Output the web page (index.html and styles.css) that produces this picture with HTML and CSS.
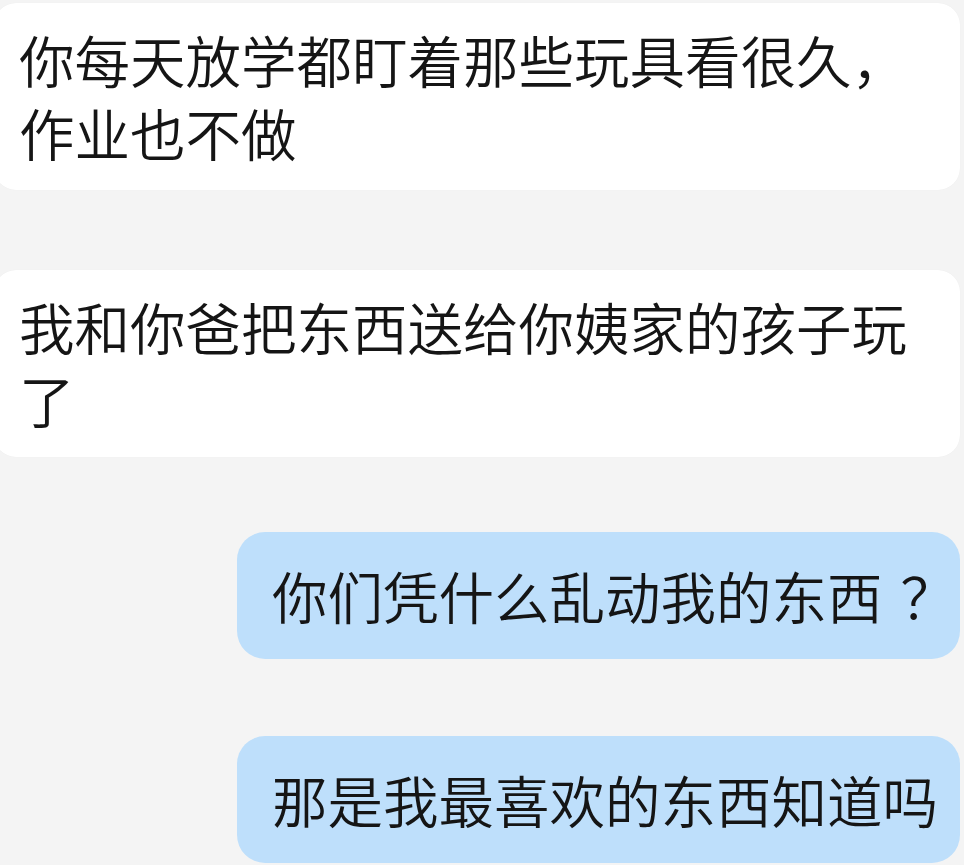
FILE: index.html
```html
<!DOCTYPE html>
<html lang="zh-CN">
<head>
<meta charset="utf-8">
<title>聊天</title>
<link rel="stylesheet" href="styles.css">
</head>
<body>
<div class="chat">
  <div class="bubble left first">你每天放学都盯着那些玩具看很久，作业也不做</div>
  <div class="bubble left second">我和你爸把东西送给你姨家的孩子玩了</div>
  <div class="bubble right third">你们凭什么乱动我的东西<span class="qmark">？</span></div>
  <div class="bubble right fourth">那是我最喜欢的东西知道吗</div>
</div>
</body>
</html>
```

FILE: styles.css
```css
html, body {
  margin: 0;
  padding: 0;
  background: #f4f4f4;
}
body {
  width: 964px;
  height: 865px;
  overflow: hidden;
  font-family: "Noto Sans CJK SC", "Noto Sans", sans-serif;
  color: #151515;
}
.chat {
  display: flex;
  flex-direction: column;
  padding-top: 3px;
}
.bubble {
  font-size: 55.5px;
  font-weight: 350;
  line-height: 73px;
  box-sizing: border-box;
}
.left {
  background: #ffffff;
  margin-left: -6px;
  margin-right: 4px;
  padding: 20px 25px 21px 25px;
  border-radius: 22px;
  box-shadow: 0 0 1px rgba(0,0,0,0.06);
}
.right {
  align-self: flex-end;
  background: #bedffb;
  margin-right: 4px;
  padding: 27px 22px 27px 35px;
  border-radius: 28px;
}
.qmark {
  display: inline-block;
  width: 55.5px;
  padding-left: 18px;
  box-sizing: border-box;
  white-space: nowrap;
  vertical-align: top;
}
.second { margin-top: 80px; }
.third { margin-top: 75px; }
.fourth { margin-top: 77px; }
```
